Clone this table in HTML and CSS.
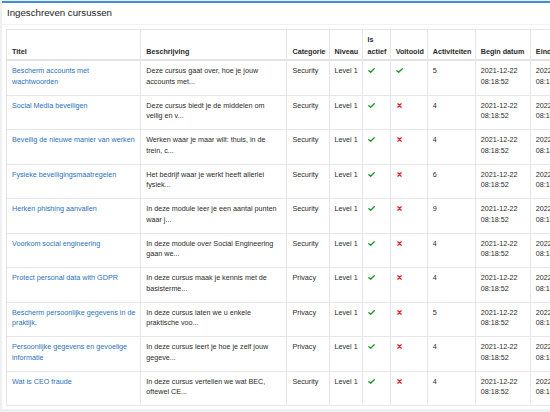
FILE: index.html
```html
<!DOCTYPE html>
<html lang="nl">
<head>
<meta charset="utf-8">
<title>Ingeschreven cursussen</title>
<link rel="stylesheet" href="styles.css">
</head>
<body>
<div class="card">
  <div class="card-header">Ingeschreven cursussen</div>
  <div class="card-body">
    <table class="courses">
      <colgroup>
        <col class="c-title"><col class="c-desc"><col class="c-cat"><col class="c-lvl"><col class="c-act"><col class="c-done"><col class="c-cnt"><col class="c-date"><col class="c-date">
      </colgroup>
      <thead>
        <tr><th>Titel</th><th>Beschrijving</th><th>Categorie</th><th>Niveau</th><th>Is actief</th><th>Voltooid</th><th>Activiteiten</th><th>Begin datum</th><th>Einddatum</th></tr>
      </thead>
      <tbody>
        <tr><td><a href="#">Bescherm accounts met wachtwoorden</a></td><td>Deze cursus gaat over, hoe je jouw accounts met...</td><td>Security</td><td class="nw">Level 1</td><td><svg class="ok" viewBox="0 0 8 6"><path d="M0.8 3.2 L3 5.2 L7.3 0.8"/></svg></td><td><svg class="ok" viewBox="0 0 8 6"><path d="M0.8 3.2 L3 5.2 L7.3 0.8"/></svg></td><td>5</td><td>2021-12-22 08:18:52</td><td>2022-12-22 08:18:52</td></tr>
        <tr><td><a href="#">Social Media beveiligen</a></td><td>Deze cursus biedt je de middelen om veilig en v...</td><td>Security</td><td class="nw">Level 1</td><td><svg class="ok" viewBox="0 0 8 6"><path d="M0.8 3.2 L3 5.2 L7.3 0.8"/></svg></td><td><svg class="no" viewBox="0 0 6 6"><path d="M1 1 L5 5 M5 1 L1 5"/></svg></td><td>4</td><td>2021-12-22 08:18:52</td><td>2022-12-22 08:18:52</td></tr>
        <tr><td><a href="#">Beveilig de nieuwe manier van werken</a></td><td>Werken waar je maar wilt: thuis, in de trein, c...</td><td>Security</td><td class="nw">Level 1</td><td><svg class="ok" viewBox="0 0 8 6"><path d="M0.8 3.2 L3 5.2 L7.3 0.8"/></svg></td><td><svg class="no" viewBox="0 0 6 6"><path d="M1 1 L5 5 M5 1 L1 5"/></svg></td><td>4</td><td>2021-12-22 08:18:52</td><td>2022-12-22 08:18:52</td></tr>
        <tr><td><a href="#">Fysieke beveiligingsmaatregelen</a></td><td>Het bedrijf waar je werkt heeft allerlei fysiek...</td><td>Security</td><td class="nw">Level 1</td><td><svg class="ok" viewBox="0 0 8 6"><path d="M0.8 3.2 L3 5.2 L7.3 0.8"/></svg></td><td><svg class="no" viewBox="0 0 6 6"><path d="M1 1 L5 5 M5 1 L1 5"/></svg></td><td>6</td><td>2021-12-22 08:18:52</td><td>2022-12-22 08:18:52</td></tr>
        <tr><td><a href="#">Herken phishing aanvallen</a></td><td>In deze module leer je een aantal punten waar j...</td><td>Security</td><td class="nw">Level 1</td><td><svg class="ok" viewBox="0 0 8 6"><path d="M0.8 3.2 L3 5.2 L7.3 0.8"/></svg></td><td><svg class="no" viewBox="0 0 6 6"><path d="M1 1 L5 5 M5 1 L1 5"/></svg></td><td>9</td><td>2021-12-22 08:18:52</td><td>2022-12-22 08:18:52</td></tr>
        <tr><td><a href="#">Voorkom social engineering</a></td><td>In deze module over Social Engineering gaan we...</td><td>Security</td><td class="nw">Level 1</td><td><svg class="ok" viewBox="0 0 8 6"><path d="M0.8 3.2 L3 5.2 L7.3 0.8"/></svg></td><td><svg class="no" viewBox="0 0 6 6"><path d="M1 1 L5 5 M5 1 L1 5"/></svg></td><td>4</td><td>2021-12-22 08:18:52</td><td>2022-12-22 08:18:52</td></tr>
        <tr><td><a href="#">Protect personal data with GDPR</a></td><td>In deze cursus maak je kennis met de basisterme...</td><td>Privacy</td><td class="nw">Level 1</td><td><svg class="ok" viewBox="0 0 8 6"><path d="M0.8 3.2 L3 5.2 L7.3 0.8"/></svg></td><td><svg class="no" viewBox="0 0 6 6"><path d="M1 1 L5 5 M5 1 L1 5"/></svg></td><td>4</td><td>2021-12-22 08:18:52</td><td>2022-12-22 08:18:52</td></tr>
        <tr><td><a href="#">Bescherm persoonlijke gegevens in de praktijk.</a></td><td>In deze cursus laten we u enkele praktische voo...</td><td>Privacy</td><td class="nw">Level 1</td><td><svg class="ok" viewBox="0 0 8 6"><path d="M0.8 3.2 L3 5.2 L7.3 0.8"/></svg></td><td><svg class="no" viewBox="0 0 6 6"><path d="M1 1 L5 5 M5 1 L1 5"/></svg></td><td>5</td><td>2021-12-22 08:18:52</td><td>2022-12-22 08:18:52</td></tr>
        <tr><td><a href="#">Persoonlijke gegevens en gevoelige informatie</a></td><td>In deze cursus leert je hoe je zelf jouw gegeve...</td><td>Privacy</td><td class="nw">Level 1</td><td><svg class="ok" viewBox="0 0 8 6"><path d="M0.8 3.2 L3 5.2 L7.3 0.8"/></svg></td><td><svg class="no" viewBox="0 0 6 6"><path d="M1 1 L5 5 M5 1 L1 5"/></svg></td><td>4</td><td>2021-12-22 08:18:52</td><td>2022-12-22 08:18:52</td></tr>
        <tr><td><a href="#">Wat is CEO fraude</a></td><td>In deze cursus vertellen we wat BEC, oftewel CE...</td><td>Security</td><td class="nw">Level 1</td><td><svg class="ok" viewBox="0 0 8 6"><path d="M0.8 3.2 L3 5.2 L7.3 0.8"/></svg></td><td><svg class="no" viewBox="0 0 6 6"><path d="M1 1 L5 5 M5 1 L1 5"/></svg></td><td>4</td><td>2021-12-22 08:18:52</td><td>2022-12-22 08:18:52</td></tr>
      </tbody>
    </table>
  </div>
</div>
</body>
</html>
```

FILE: styles.css
```css
html, body {
  margin: 0;
  padding: 0;
}
body {
  background: #eeeff1;
  font-family: "Liberation Sans", Arial, Helvetica, sans-serif;
  color: #333;
  padding: 1px 0 0 2px;
  height: 412px;
  box-sizing: border-box;
  overflow: hidden;
}
.card {
  background: #fff;
  border-top: 2px solid #3d8fdc;
  height: 406px;
  overflow: hidden;
}
.card-header {
  height: 21px;
  padding-left: 5px;
  font-size: 9.7px;
  line-height: 20px;
  color: #222;
  border-bottom: 1px solid #f2f2f2;
}
.card-body {
  padding: 4px 0 0 4px;
}
.courses {
  border-collapse: collapse;
  table-layout: fixed;
  width: 580px;
  font-size: 7.2px;
  line-height: 10.7px;
  color: #2a2a2a;
}
.c-title { width: 134px; }
.c-desc { width: 146px; }
.c-cat { width: 42px; }
.c-lvl { width: 33px; }
.c-act { width: 28px; }
.c-done { width: 37px; }
.c-cnt { width: 48px; }
.c-date { width: 55px; }
.courses th,
.courses td {
  border: 1px solid #e6e6e6;
  text-align: left;
  padding: 5px 4px 3px 5px;
  vertical-align: top;
  overflow: hidden;
}
.courses th {
  font-weight: bold;
  vertical-align: bottom;
  height: 22px;
  padding-top: 4px;
  padding-bottom: 2px;
  line-height: 11.5px;
  border-bottom: 2px solid #e3e3e3;
}
.courses td {
  height: 25.5px;
}
.courses .nw {
  white-space: nowrap;
}
.courses a {
  color: #2b72b8;
  text-decoration: none;
}
.ok, .no {
  display: block;
  margin-top: 2px;
  fill: none;
  stroke-linecap: round;
  stroke-linejoin: round;
}
.ok {
  width: 7px;
  height: 5px;
  stroke: #1f9a2f;
  stroke-width: 1.6;
}
.no {
  width: 5px;
  height: 5px;
  margin-left: 1px;
  stroke: #e0282c;
  stroke-width: 1.6;
}
```
